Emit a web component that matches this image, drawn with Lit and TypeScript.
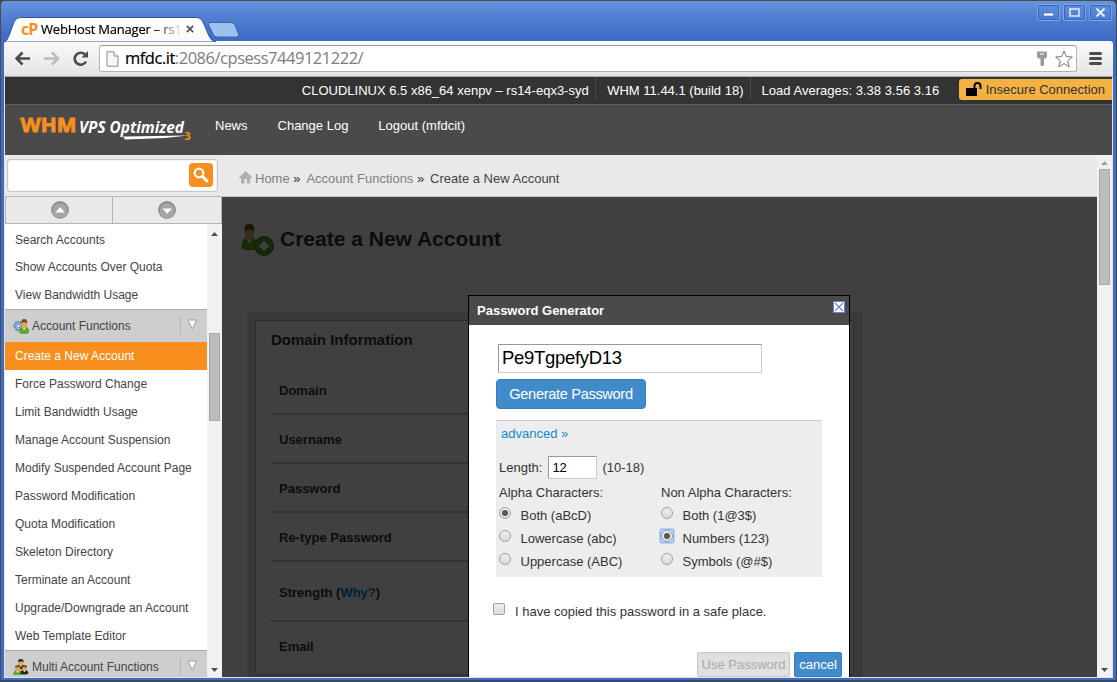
import { LitElement, html, css, svg } from "lit";
import { customElement, property } from "lit/decorators.js";

const person = (hair: string, shirt: string) => svg`
  <path d="M1 16c0-5 2-7 7-7s7 2 7 7c-3 1.500-11 1.500-14 0z" fill=${shirt} stroke="#3a6a14" stroke-width=".6"/>
  <path d="M5 9l3 4 3-4z" fill="#fff"/>
  <rect x="4" y="2" width="8" height="8.500" rx="3.500" fill="#e3a955"/>
  <path d="M3.500 6V2.500Q4 0 8 0t4.500 2.500V6L11 4H5z" fill=${hair}/>`;

@customElement("side-bar")
class SideBar extends LitElement {
  static styles = css`
    :host { display: flex; flex-direction: column; width: 217px; flex: none; background: #fff; }
    .search { height: 42px; background: #e9e9e9; padding: 4px 4px 0 2px; box-sizing: border-box; border-bottom: 1px solid #b9b9b9; }
    .field { height: 33px; box-sizing: border-box; border: 1px solid #c6c6c6; border-radius: 3px; background: #fff; display: flex; justify-content: flex-end; padding: 3px 4px; box-shadow: inset 0 0 1px #999; }
    .go { width: 24px; height: 24px; border-radius: 4px; background: #f78e1e; }
    .jump { display: grid; grid-template-columns: 107px 1fr; height: 27px; background: #e9e9e9; border: 1px solid #b5b5b5; border-top: 0; box-sizing: border-box; }
    .jump div { display: flex; align-items: center; justify-content: center; }
    .jump div:first-child { border-right: 1px solid #b5b5b5; padding-left: 2px; }
    .row { display: flex; flex: 1; min-height: 0; overflow: hidden; }
    .list { width: 202px; padding-top: 1px; font-size: 12px; color: #444; }
    .item { height: 28px; line-height: 28px; padding-left: 10px; white-space: nowrap; }
    .item:first-child { line-height: 30px; }
    .item.on { background: #f78e1e; color: #fff; }
    .group { height: 33px; box-sizing: border-box; border-top: 1px solid #aaa; background: #cecece; display: flex; align-items: center; padding-left: 8px; }
    .group svg { flex: none; margin-right: 3px; }
    .group span { flex: 1; white-space: nowrap; }
    .group i { height: 18px; border-left: 1px solid #b5b5b5; width: 26px; display: flex; }
    .group i svg { margin: 1px 0 0 5px; }
    .bar { width: 15px; background: #f1f1f1; display: flex; flex-direction: column; align-items: center; }
    .thumb { margin-top: 97px; width: 11px; height: 88px; box-sizing: border-box; background: #bcbcbc; border: 1px solid #a8a8a8; }
    .bar .up { margin-top: 8px; }
    .bar .dn { margin-top: auto; margin-bottom: 5px; }
  `;
  group(name: string, multi: boolean) {
    return html`<div class="group">
      <svg width="16" height="16" viewBox="0 0 16 16">${multi
        ? svg`<g transform="translate(3 0) scale(.6)">${person("#222", "#333")}</g><g transform="translate(0 6) scale(.6)">${person("#8a5a1c", "#5fae2a")}</g><g transform="translate(7 6) scale(.55)">${person("#7a4a10", "#222")}</g>`
        : svg`<circle cx="5.500" cy="8" r="4" fill="none" stroke="#4f87c9" stroke-width="2.400" stroke-dasharray="1.800 .7"/><circle cx="5.500" cy="8" r="1.800" fill="#e8f1fb" stroke="#4f87c9"/><g transform="translate(6 1) scale(.65 .85)">${person("#7a4a10", "#5fae2a")}</g>`}</svg>
      <span>${name}</span>
      <i><svg width="12" height="12" viewBox="0 0 12 12"><path d="M2 2H10.500L6.200 11z" fill="#fff" stroke="#999" stroke-width=".9"/></svg></i>
    </div>`;
  }
  render() {
    const top = ["Search Accounts", "Show Accounts Over Quota", "View Bandwidth Usage"];
    const fns = ["Create a New Account", "Force Password Change", "Limit Bandwidth Usage", "Manage Account Suspension", "Modify Suspended Account Page", "Password Modification", "Quota Modification", "Skeleton Directory", "Terminate an Account", "Upgrade/Downgrade an Account", "Web Template Editor"];
    const knob = (d: string) => html`<svg width="20" height="20" viewBox="0 0 20 20"><circle cx="10" cy="10.500" r="9" fill="#fff"/><circle cx="10" cy="10" r="9" fill="#8f8f8f"/><circle cx="10" cy="10.800" r="7.500" fill="#a6a6a6"/><path d=${d} fill="#fff"/></svg>`;
    return html`
      <div class="search"><div class="field"><div class="go">
        <svg width="24" height="24" viewBox="0 0 24 24" fill="none" stroke="#fff"><circle cx="10" cy="10" r="4.300" stroke-width="2.300"/><path d="M13.500 13.500L18 18" stroke-width="3" stroke-linecap="round"/></svg>
      </div></div></div>
      <div class="jump"><div>${knob("M5.500 12.500h9.500L10.200 7.200z")}</div><div>${knob("M5.500 8.500h9.500l-4.800 5.200z")}</div></div>
      <div class="row">
        <div class="list">
          ${top.map((t) => html`<div class="item">${t}</div>`)}
          ${this.group("Account Functions", false)}
          ${fns.map((t, i) => html`<div class="item ${i ? "" : "on"}">${t}</div>`)}
          ${this.group("Multi Account Functions", true)}
        </div>
        <div class="bar">
          <svg class="up" width="7" height="4" viewBox="0 0 7 4"><path d="M0 4L3.500 0 7 4z" fill="#505050"/></svg>
          <div class="thumb"></div>
          <svg class="dn" width="7" height="4" viewBox="0 0 7 4"><path d="M0 0h7L3.500 4z" fill="#505050"/></svg>
        </div>
      </div>`;
  }
}

@customElement("radio-line")
class RadioLine extends LitElement {
  @property() label = "";
  @property({ type: Boolean }) on = false;
  @property({ type: Boolean }) ring = false;
  static styles = css`
    :host { display: flex; height: 23px; line-height: 23px; white-space: nowrap; }
    .wrap { width: 12px; height: 12px; margin: 3px 9.500px 0 0; border-radius: 1px; }
    .dot { width: 12px; height: 12px; box-sizing: border-box; border: 1px solid #a0a0a0; border-radius: 50%; background: linear-gradient(#eee, #dcdcdc); display: grid; place-items: center; }
    .on::after { content: ""; width: 6px; height: 6px; border-radius: 50%; background: #555; }
    .ring { background: #c3d6f7; box-shadow: 0 0 0 1.500px #8fb4f5; }
  `;
  render() {
    return html`<div class="wrap ${this.ring ? "ring" : ""}"><div class="dot ${this.on ? "on" : ""}"></div></div><span>${this.label}</span>`;
  }
}

@customElement("password-dialog")
class PasswordDialog extends LitElement {
  static styles = css`
    :host { display: block; box-sizing: border-box; border: 1px solid #000; border-bottom: 0; background: #fff; color: #333; font-size: 13px; white-space: nowrap; }
    .head { height: 29px; line-height: 29px; background: #4a4a4a; color: #fff; font-weight: bold; padding: 0 4px 0 8px; display: flex; justify-content: space-between; }
    .head svg { margin-top: 5px; }
    .body { padding: 19px 27px 0; }
    .pw { width: 264px; height: 29px; box-sizing: border-box; border: 1px solid #999; border-right-color: #ccc; border-bottom-color: #ccc; margin-left: 2px; padding-left: 3px; line-height: 26px; font-size: 18.500px; letter-spacing: -0.300px; color: #000; }
    .gen { width: 150px; height: 30px; box-sizing: border-box; margin-top: 6px; border: 1px solid #357ebd; border-radius: 4px; background: #428bca; color: #fff; font-size: 14.600px; letter-spacing: -0.330px; line-height: 28px; text-align: center; }
    .adv { margin-top: 11px; width: 326px; height: 157px; box-sizing: border-box; border-top: 1px solid #ccc; background: #ededed; padding: 3px 3px 0; }
    .link { color: #1189cc; height: 20px; line-height: 20px; padding-left: 2px; }
    .len { display: flex; align-items: center; height: 23px; margin-top: 12px; gap: 6px; }
    .num { width: 49px; height: 23px; box-sizing: border-box; border: 1px solid #999; border-right-color: #ccc; border-bottom-color: #ccc; background: #fff; color: #000; padding-left: 3px; line-height: 22px; margin-right: -1px; }
    .cols { display: grid; grid-template-columns: 162px 1fr; margin-top: 2px; }
    .cols p { margin: 0; height: 23px; line-height: 24px; }
    .chk { display: flex; margin-top: 26px; height: 18px; line-height: 18px; margin-left: -3px; }
    .box { width: 12px; height: 12px; box-sizing: border-box; border: 1px solid #a0a0a0; border-radius: 2px; background: linear-gradient(#eee, #dcdcdc); margin-right: 10px; }
    .foot { display: flex; justify-content: flex-end; gap: 4px; margin-top: 31px; margin-right: -20px; }
    .foot div { height: 25px; box-sizing: border-box; line-height: 24px; text-align: center; border: 1px solid #c6c6c6; background: #e0e0e0; color: #aaa; border-radius: 2px; width: 93px; }
    .foot .ok { width: 48px; border-color: #357ebd; background: #428bca; color: #fff; }
  `;
  render() {
    return html`
      <div class="head"><span>Password Generator</span>
        <svg width="12" height="12" viewBox="0 0 12 12"><rect x=".5" y=".5" width="11" height="11" fill="#fff" stroke="#6c80d2"/><path d="M2 2l8 8M10 2l-8 8" stroke="#6c80d2" stroke-width="1.100"/></svg></div>
      <div class="body">
        <div class="pw">Pe9TgpefyD13</div>
        <div class="gen">Generate Password</div>
        <div class="adv">
          <div class="link">advanced »</div>
          <div class="len"><span>Length:</span><div class="num">12</div><span>(10-18)</span></div>
          <div class="cols">
            <div><p>Alpha Characters:</p>
              <radio-line label="Both (aBcD)" on></radio-line><radio-line label="Lowercase (abc)"></radio-line><radio-line label="Uppercase (ABC)"></radio-line></div>
            <div><p>Non Alpha Characters:</p>
              <radio-line label="Both (1@3$)"></radio-line><radio-line label="Numbers (123)" on ring></radio-line><radio-line label="Symbols (@#$)"></radio-line></div>
          </div>
        </div>
        <div class="chk"><div class="box"></div><span>I have copied this password in a safe place.</span></div>
        <div class="foot"><div>Use Password</div><div class="ok">cancel</div></div>
      </div>`;
  }
}

@customElement("browser-chrome")
class BrowserChrome extends LitElement {
  static styles = css`
    :host { display: block; font-family: "Open Sans", "Noto Sans", sans-serif; }
    .title { height: 40px; display: flex; padding: 0 1px; }
    .tabs { flex: none; margin-left: -3px; margin-top: 15px; width: 240px; height: 25px; position: relative; }
    .tabs svg { display: block; }
    .cap { position: absolute; left: 19px; top: 0; display: flex; align-items: center; height: 26px; white-space: nowrap; }
    .cp { color: #f78e1e; font: bold 16px/24px "Open Sans"; letter-spacing: -1px; width: 20px; }
    .name { font-size: 13px; letter-spacing: -0.200px; color: #000; width: 138px; -webkit-text-stroke: 0.200px #000; -webkit-mask-image: linear-gradient(90deg, #000 112px, rgba(0, 0, 0, 0.15) 138px); }
    .x { margin-left: 7px; }
    .btns { display: flex; gap: 3px; margin: 3px 0 0 auto; }
    .btns div { width: 23px; height: 17px; box-sizing: border-box; border: 1px solid #7ea6ea; outline: 1px solid #3c66b4; outline-offset: -2px; border-radius: 2px; display: grid; place-items: center; }
    .tool { height: 36px; box-sizing: border-box; background: linear-gradient(#fafafa, #e4e4e4); border-bottom: 1px solid #a8a8a8; display: flex; padding: 4px 11px 0 11px; border-radius: 3px 3px 0 0; }
    .ico { flex: none; }
    .url { flex: 1; height: 27px; box-sizing: border-box; margin: 0 12px 0 0; border: 1px solid #b2b2b2; border-top-color: #9a9a9a; border-radius: 3px; background: #fff; display: flex; align-items: center; padding: 0 3px 0 6px; }
    .addr { font-size: 16.500px; letter-spacing: -0.480px; line-height: 24px; margin: -2px 0 0 6px; color: #7d7d7d; flex: 1; }
    .addr b { font-weight: normal; color: #000; -webkit-text-stroke: 0.200px #000; }
    .star { margin-left: 8px; }
  `;
  render() {
    return html`
      <div class="title">
        <div class="tabs">
          <svg width="240" height="26" viewBox="0 0 240 26"><defs><linearGradient id="t" x2="0" y2="1"><stop stop-color="#fff"/><stop offset="1" stop-color="#fafafa"/></linearGradient></defs>
            <path d="M2 26C5 25 6 22 8 17L12 6Q14 1.500 18 1.500H195Q199 1.500 201 6L207 20Q209 25 214 26z" fill="url(#t)" stroke="#315497" stroke-width="1"/>
            <path d="M207 6.500H229Q232 6.500 233 9l3.500 9q1 3-2 3H215q-3 0-4-3l-4.500-9.500z" fill="#9dc2f0" stroke="#3c62ad"/></svg>
          <div class="cap"><span class="cp">cP</span><span class="name">WebHost Manager – rs1</span>
            <svg class="x" width="8" height="8" viewBox="0 0 8 8"><path d="M.8 .8l6.400 6.400M7.200 .8L.8 7.200" stroke="#555" stroke-width="1.700"/></svg></div>
        </div>
        <div class="btns">
          <div><svg width="11" height="9"><rect x=".5" y="5" width="10" height="3" fill="#fff" stroke="#3a5fa6" stroke-width=".6"/></svg></div>
          <div><svg width="11" height="9"><rect x="1" y="1" width="9" height="7" fill="none" stroke="#e6eefb" stroke-width="1.500"/></svg></div>
          <div><svg width="11" height="9"><path d="M1.500 .5l8 8M9.500 .5l-8 8" stroke="#e6eefb" stroke-width="2"/></svg></div>
        </div>
      </div>
      <div class="tool">
        <svg class="ico" width="84" height="27" viewBox="15 45 84 27" fill="none"><path d="M30 58.500H17M22.500 52.500l-6 6 6 6" stroke="#4c4c4c" stroke-width="2.600"/><path d="M44 58.500H57M52 52.500l6 6-6 6" stroke="#bcbcbc" stroke-width="2.600"/><path d="M86 61.500A6 6 0 1 1 85 54.500" stroke="#4c4c4c" stroke-width="2.600"/><path d="M88 51v6.500h-6.500z" fill="#4c4c4c"/></svg>
        <div class="url">
          <svg width="13" height="16" viewBox="0 0 13 16"><path d="M1 .8h7L12 5v10.200H1z" fill="#f6f6f6" stroke="#8c8c8c"/><path d="M8 .8V5h4" fill="#fff" stroke="#8c8c8c"/></svg>
          <div class="addr"><b>mfdc.it</b>:2086/cpsess7449121222/</div>
          <svg width="10" height="16" viewBox="0 0 10 16"><path d="M0 1.500Q0 .5 1 .5h8q1 0 1 1V6L8.500 7.500H7V14L5 15.500 3.500 14V7.500H1.500L0 6z" fill="#999"/><path d="M3 3h4" stroke="#fff"/></svg>
          <svg class="star" width="18" height="18" viewBox="0 0 18 18"><path d="M9 1l2.300 5.600 6 .4-4.600 3.900 1.500 5.900L9 13.600l-5.200 3.200 1.500-5.900L.7 7l6-.4z" fill="#fff" stroke="#777" stroke-linejoin="round"/></svg>
        </div>
        <svg class="ico" width="13" height="27" viewBox="0 0 13 27"><path d="M1.500 8.500h10M1.500 13.500h10M1.500 18.500h10" stroke="#4c4c4c" stroke-width="3" stroke-linecap="round"/></svg>
      </div>`;
  }
}

@customElement("app-root")
class AppRoot extends LitElement {
  static styles = css`
    :host { display: block; width: 1117px; height: 682px; background: #444; font-family: "Liberation Sans", Arial, sans-serif; font-size: 13px; overflow: hidden; }
    .win { box-sizing: border-box; height: 681px; margin-right: 1px; border-radius: 5px 5px 2px 2px; padding: 0 3px 2px 3px; border: 1px solid #2b4f97; border-top-color: #4d4d4d; border-left-color: #4d4d4d; border-right-width: 0; background: linear-gradient(#6494de, #4c7bcf 20px, #3e6cc4 38px, #3e6cc4); display: flex; flex-direction: column; }
    .page { flex: 1; min-height: 0; display: flex; flex-direction: column; overflow: hidden; border: 1px solid #dde3ee; border-top: 0; }
    .top { height: 27px; flex: none; background: #333; color: #fff; display: flex; justify-content: flex-end; line-height: 27px; }
    .top span { padding: 0 6.500px 0 11px; }
    .top span + span { border-left: 1px solid #4a4a4a; height: 23px; }
    .top .load { padding-left: 10.500px; letter-spacing: 0.030px; }
    .top .lock { margin-left: 13px; margin-top: 2px; height: 21px; background: #f4b143; color: #333; border-radius: 3px 0 0 3px; display: flex; align-items: center; gap: 4px; padding: 0 7px; line-height: 22px; }
    .nav { height: 51px; flex: none; box-sizing: border-box; border-top: 1px solid #5e5e5e; background: #4a4a4a; color: #fff; display: flex; line-height: 42px; gap: 30px; }
    .logo { width: 180px; height: 50px; overflow: visible; font-family: "Open Sans", sans-serif; }
    .main { display: flex; flex: 1; min-height: 0; }
    .view { flex: 1; min-width: 0; display: flex; flex-direction: column; }
    .crumbs { height: 42px; flex: none; box-sizing: border-box; background: #e9e9e9; border-bottom: 1px solid #c6c6c6; color: #808080; line-height: 47px; padding-left: 17px; display: flex; }
    .crumbs b { font-weight: normal; color: #333; margin: 0 6px 0 3.500px; }
    .crumbs svg { margin-top: 16px; margin-right: 3px; }
    .crumbs em { font-style: normal; color: #444; }
    .doc { flex: 1; position: relative; overflow: hidden; background: #fff; color: #333; padding: 24px 0 0 18px; }
    .h1 { display: flex; height: 36px; font-size: 21px; font-weight: bold; line-height: 36px; gap: 5px; }
    .panel { margin: 55px 0 0 7px; width: 615px; box-sizing: border-box; padding: 8px; background: #e2e2e2; height: 380px; }
    .inner { border: 1px solid #b8b8b8; background: #fff; height: 355px; box-sizing: border-box; padding: 0 15px; font-weight: bold; }
    .inner h2 { margin: 0; font-size: 15px; line-height: 38px; height: 45px; }
    .f { height: 49px; box-sizing: border-box; border-bottom: 2px solid #ccc; padding-left: 8px; line-height: 49px; }
    .f.tall { height: 60px; line-height: 62px; }
    .f.last { border: 0; line-height: 49px; }
    .f u { text-decoration: none; color: #08c; }
    .shade { position: absolute; inset: 0; background: rgba(0, 0, 0, 0.75); }
    password-dialog { position: absolute; left: 246px; top: 98px; width: 382px; height: 400px; }
    .bar { width: 15px; flex: none; background: #f1f1f1; display: flex; flex-direction: column; align-items: center; }
    .bar .up { margin-top: 6px; }
    .thumb { margin-top: 4px; width: 11px; height: 116px; box-sizing: border-box; background: #bcbcbc; border: 1px solid #a8a8a8; }
    .bar .dn { margin-top: auto; margin-bottom: 5px; }
  `;
  render() {
    return html`<div class="win">
      <browser-chrome></browser-chrome>
      <div class="page">
        <div class="top"><span>CLOUDLINUX 6.5 x86_64 xenpv – rs14-eqx3-syd</span><span>WHM 11.44.1 (build 18)</span><span class="load">Load Averages: 3.38 3.56 3.16</span>
          <div class="lock"><svg width="16" height="15" viewBox="0 0 16 15"><rect x="0" y="6" width="11" height="8" fill="#000"/><path d="M8.500 6V4a3 3 0 0 1 6 0v3" fill="none" stroke="#000" stroke-width="2"/></svg>Insecure Connection</div></div>
        <div class="nav">
          <svg class="logo" viewBox="0 0 180 50">
            <text x="15.500" y="27" font-size="20" font-weight="700" fill="#f78e1e" textLength="56" lengthAdjust="spacingAndGlyphs" stroke="#f78e1e" stroke-width=".9">WHM</text>
            <text x="74" y="28" font-size="15.500" font-weight="700" font-style="italic" fill="#fff" textLength="105" lengthAdjust="spacingAndGlyphs">VPS Optimized</text>
            <path d="M118 31.500L120 31.500 183 30.500 160 33 120 34.500z" fill="#fff"/>
            <text x="179.500" y="35" font-size="11" font-weight="700" fill="#f78e1e">3</text>
          </svg>
          <span>News</span><span>Change Log</span><span>Logout (mfdcit)</span></div>
        <div class="main">
          <side-bar></side-bar>
          <div class="view">
            <div class="crumbs"><svg width="13" height="13" viewBox="0 0 13 13"><path d="M6.500 0L0 6.300 1 7.300H2V12.500H5.500V8H8v4.500H11V7.300h1.300l.7-1z" fill="#b0b0b0"/></svg>Home<b>»</b>Account Functions<b>»</b><em>Create a New Account</em></div>
            <div class="doc">
              <div class="h1"><svg width="35" height="36" viewBox="0 0 35 36"><g transform="translate(1 3) scale(1.050 1.500)">${person("#7a4f14", "#5fae2a")}</g><circle cx="24" cy="25" r="9.500" fill="#4ea32a" stroke="#2e7a14"/><path d="M24 20.500v9M19.500 25h9" stroke="#fff" stroke-width="3.500"/></svg>Create a New Account</div>
              <div class="panel"><div class="inner"><h2>Domain Information</h2>
                <div class="f">Domain</div><div class="f">Username</div><div class="f">Password</div><div class="f">Re-type Password</div>
                <div class="f tall">Strength (<u>Why?</u>)</div><div class="f last">Email</div></div></div>
              <div class="shade"></div>
              <password-dialog></password-dialog>
            </div>
          </div>
          <div class="bar">
            <svg class="up" width="7" height="4" viewBox="0 0 7 4"><path d="M0 4L3.500 0 7 4z" fill="#a0a0a0"/></svg>
            <div class="thumb"></div>
            <svg class="dn" width="7" height="4" viewBox="0 0 7 4"><path d="M0 0h7L3.500 4z" fill="#505050"/></svg>
          </div>
        </div>
      </div>
    </div>`;
  }
}
